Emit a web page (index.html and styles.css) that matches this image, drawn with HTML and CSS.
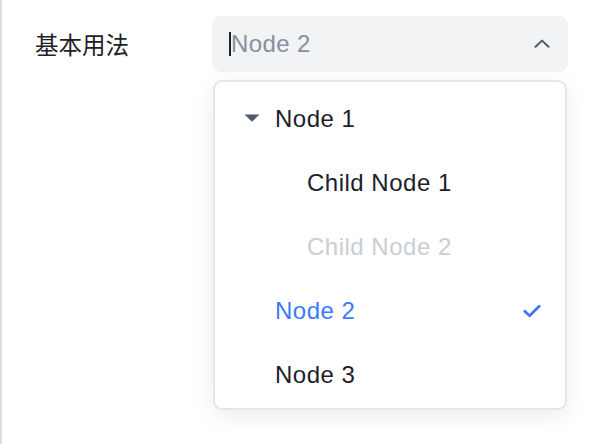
FILE: index.html
```html
<!DOCTYPE html>
<html lang="zh-CN">
<head>
    <meta charset="UTF-8">
    <meta name="viewport" content="width=device-width, initial-scale=1.0">
    <title>TreeSelect 基本用法</title>
    <link rel="stylesheet" href="styles.css">
</head>
<body>
  <div class="demo">
    <div class="form-row">
      <label class="form-label">基本用法</label>

      <div class="tree-select">
        <div class="tree-select-view">
          <span class="caret"></span>
          <span class="placeholder">Node 2</span>
          <svg class="arrow" width="16" height="9" viewBox="0 0 16 9">
            <path d="M1.5 7.8 L8 1.6 L14.5 7.8" fill="none" stroke="#4e5969" stroke-width="2" stroke-linecap="round" stroke-linejoin="round"/>
          </svg>
        </div>

        <!-- desplegable del arbol -->
        <div class="tree-popup">
          <div class="tree-node">
            <svg class="switcher" width="16" height="8" viewBox="0 0 16 8">
              <path d="M0.5 0.5 L15.5 0.5 L8 7.8 Z" fill="#4e5969"/>
            </svg>
            <span>Node 1</span>
          </div>
          <div class="tree-node child">
            <span>Child Node 1</span>
          </div>
          <div class="tree-node child disabled">
            <span>Child Node 2</span>
          </div>
          <div class="tree-node selected">
            <span>Node 2</span>
            <svg class="check" width="18" height="14" viewBox="0 0 18 14">
              <path d="M1.8 7.2 L6.6 11.8 L16.2 2.2" fill="none" stroke="#3a7afe" stroke-width="2.8" stroke-linecap="round" stroke-linejoin="round"/>
            </svg>
          </div>
          <div class="tree-node">
            <span>Node 3</span>
          </div>
        </div>
      </div>
    </div>
  </div>
</body>
</html>
```

FILE: styles.css
```css
body {
    margin: 0;
    background: #fff;
    font-family: "Liberation Sans", Arial, "Noto Sans CJK SC", sans-serif;
    color: #1d2129;
}

.demo {
    height: 100vh;
    border-left: 2px solid #dcdde3;
    padding: 16px 0 0 33px;
    box-sizing: border-box;
}

.form-row {
    display: flex;
    align-items: flex-start;
}

.form-label {
    width: 177px;
    height: 56px;
    line-height: 56px;
    font-family: "Noto Sans CJK SC", sans-serif;
    font-size: 23.5px;
    color: #1d2129;
}

.tree-select {
    position: relative;
    width: 356px;
}

.tree-select-view {
    display: flex;
    align-items: center;
    height: 56px;
    padding: 0 18px 0 17px;
    background: #f2f3f5;
    border-radius: 9px;
}

.caret {
    width: 2px;
    height: 24px;
    background: #1d2129;
}

.placeholder {
    flex: 1;
    font-size: 24px;
    letter-spacing: 0.4px;
    color: #86909c;
}

.arrow {
    margin-top: -2px;
}

.tree-popup {
    position: absolute;
    top: 64px;
    left: 1px;
    right: 1px;
    padding: 5px 0 1px;
    background: #fff;
    border: 2px solid #e5e6eb;
    border-radius: 9px;
    box-shadow: 0 6px 24px rgba(0, 0, 0, 0.08);
}

.tree-node {
    display: flex;
    align-items: center;
    height: 64px;
    padding: 0 24px 0 60px;
    font-size: 24px;
    letter-spacing: 0.5px;
    color: #1d2129;
}

.tree-node span {
    flex: 1;
}

.switcher {
    margin-left: -31px;
    margin-right: 15px;
    margin-top: -2px;
}

.tree-node.child {
    padding-left: 92px;
}

.tree-node.disabled {
    color: #c9cdd4;
}

.tree-node.selected {
    color: #3a7afe;
}
```
